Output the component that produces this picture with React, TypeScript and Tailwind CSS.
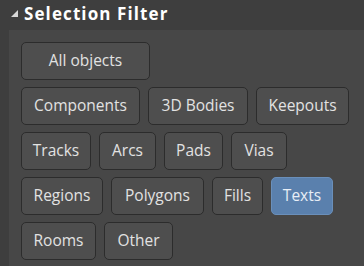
const rows: { label: string; w: string; active?: boolean }[][] = [
  [{ label: 'All objects', w: 'w-[129px]' }],
  [
    { label: 'Components', w: 'w-[119px]' },
    { label: '3D Bodies', w: 'w-[100px]' },
    { label: 'Keepouts', w: 'w-[93px]' },
  ],
  [
    { label: 'Tracks', w: 'w-[70px]' },
    { label: 'Arcs', w: 'w-[57px]' },
    { label: 'Pads', w: 'w-[59px]' },
    { label: 'Vias', w: 'w-[56px]' },
  ],
  [
    { label: 'Regions', w: 'w-[82px]' },
    { label: 'Polygons', w: 'w-[93px]' },
    { label: 'Fills', w: 'w-[51px]' },
    { label: 'Texts', w: 'w-[62px]', active: true },
  ],
  [
    { label: 'Rooms', w: 'w-[75px]' },
    { label: 'Other', w: 'w-[69px]' },
  ],
];

function FilterButton({ label, w, active }: { label: string; w: string; active?: boolean }) {
  return (
    <button
      className={
        active
          ? `${w} flex h-[38px] items-center justify-center rounded-[5px] border-[1.5px] border-[#6a8fba] bg-[#5a80ad] text-[15.5px] text-[#e8eef6]`
          : `${w} flex h-[38px] items-center justify-center rounded-[5px] border-[1.5px] border-[#2c2c2c] bg-[#4e4e4e] text-[15.5px] text-[#e2e2e2]`
      }
    >
      {label}
    </button>
  );
}

export default function App() {
  return (
    <div
      className="flex h-[266px] w-[364px] flex-col overflow-hidden bg-[#3e3e3e]"
      style={{ fontFamily: '"Open Sans", "Noto Sans", sans-serif' }}
    >
      <div className="flex h-[30px] items-center gap-[6px] pb-[3px] pl-[11px]">
        <svg width="7" height="7" viewBox="0 0 7 7">
          <path d="M7 0 L7 7 L0 7 Z" fill="#d8d8d8" />
        </svg>
        <span className="text-[17px] font-bold tracking-[1.1px] text-white">Selection Filter</span>
      </div>
      <div className="ml-[9px] flex flex-1 flex-col gap-[7px] bg-[#474747] pl-[12px] pt-[12px]">
        {rows.map((row, i) => (
          <div key={i} className="flex gap-[8px]">
            {row.map((b) => (
              <FilterButton key={b.label} {...b} />
            ))}
          </div>
        ))}
      </div>
    </div>
  );
}
